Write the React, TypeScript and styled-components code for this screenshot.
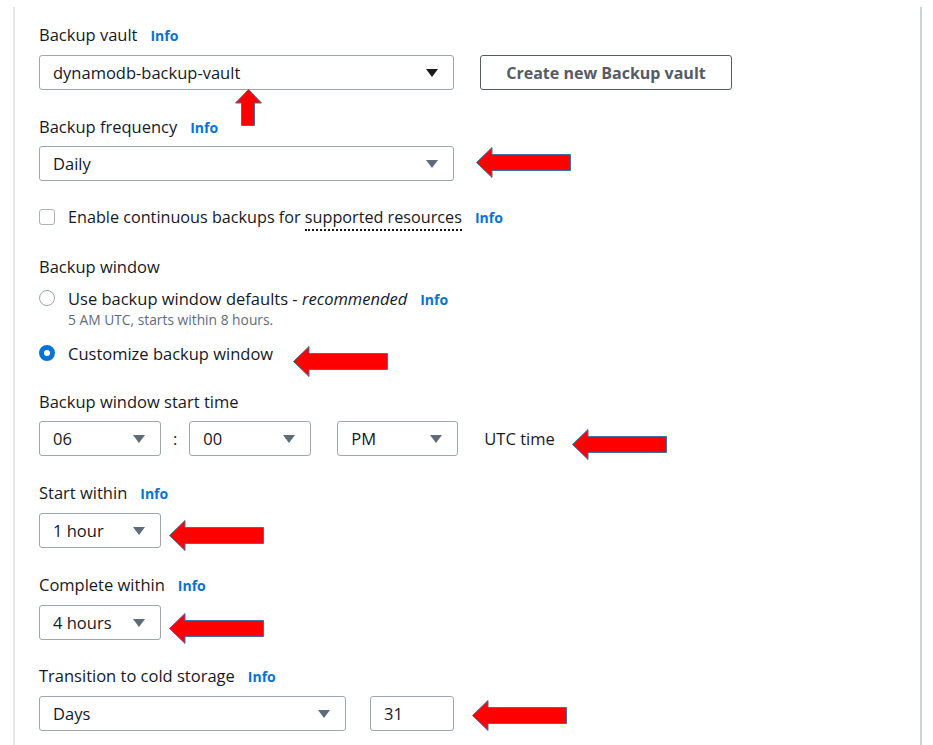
import React from 'react'
import styled, { createGlobalStyle } from 'styled-components'

const GlobalStyle = createGlobalStyle`
  html, body {
    margin: 0;
    padding: 0;
    background: #ffffff;
  }
  body {
    font-family: "Open Sans", "Liberation Sans", Arial, sans-serif;
    color: #16191f;
  }
`

const Page = styled.div`
  padding: 7px 0 0 13px;
  width: 933px;
  height: 745px;
  box-sizing: border-box;
  overflow: hidden;
`

const Panel = styled.div`
  width: 909px;
  min-height: 760px;
  box-sizing: border-box;
  border-left: 2px solid #e6e8ea;
  border-right: 2px solid #cfd2d5;
  padding: 17px 0 0 24px;
`

const Group = styled.div<{ $mb?: number }>`
  margin-bottom: ${p => (p.$mb ?? 26)}px;
`

const Label = styled.div<{ $mb?: number }>`
  display: flex;
  align-items: baseline;
  gap: 13px;
  font-size: 16.5px;
  line-height: 22px;
  margin-bottom: ${p => (p.$mb ?? 8)}px;
  color: #16191f;
`

const Info = styled.span`
  font-size: 14px;
  font-weight: 700;
  color: #0972d3;
`

const Row = styled.div<{ $gap?: number }>`
  position: relative;
  display: flex;
  align-items: center;
  gap: ${p => (p.$gap ?? 26)}px;
`

const SelectBox = styled.div<{ $w: number; $ml?: number }>`
  width: ${p => p.$w}px;
  height: 35px;
  margin-left: ${p => p.$ml ?? 0}px;
  box-sizing: border-box;
  border: 1px solid #9ea6ae;
  border-radius: 3px;
  background: #fff;
  display: flex;
  align-items: center;
  justify-content: space-between;
  padding: 0 15px 0 13px;
  font-size: 16.5px;
  color: #16191f;
`

const InputBox = styled(SelectBox)`
  justify-content: flex-start;
`

const Button = styled.div`
  width: 252px;
  height: 35px;
  box-sizing: border-box;
  border: 1px solid #545b64;
  border-radius: 3px;
  display: flex;
  align-items: center;
  justify-content: center;
  font-size: 16px;
  font-weight: 700;
  color: #545b64;
`

const Check = styled.div`
  width: 16px;
  height: 16px;
  box-sizing: border-box;
  border: 1px solid #aab2ba;
  border-radius: 3px;
  flex-shrink: 0;
`

const Radio = styled.div<{ $on?: boolean }>`
  width: 16px;
  height: 16px;
  box-sizing: border-box;
  border-radius: 50%;
  flex-shrink: 0;
  border: ${p => (p.$on ? '5px solid #0972d3' : '1.5px solid #9ea6ae')};
  background: #fff;
`

const OptionRow = styled.div<{ $fs?: number }>`
  position: relative;
  display: flex;
  align-items: center;
  gap: 13px;
  height: 22px;
  font-size: ${p => p.$fs ?? 16.5}px;
`

const OptionText = styled.span`
  display: flex;
  align-items: baseline;
  gap: 13px;
`

const Dotted = styled.span`
  border-bottom: 2px dotted #16191f;
  padding-bottom: 1px;
`

const Sub = styled.div`
  font-size: 13.8px;
  line-height: 18px;
  color: #5f6b7a;
  padding-left: 29px;
  margin: 2px 0 13px;
`

const Colon = styled.span`
  font-size: 16.5px;
`

const PlainText = styled.span`
  font-size: 16.5px;
  margin-left: 14px;
`

const Annot = styled.svg<{ $l: number; $t: number }>`
  position: absolute;
  left: ${p => p.$l}px;
  top: ${p => p.$t}px;
  overflow: visible;
`

function Caret({ dark }: { dark?: boolean }) {
  return (
    <svg width="12" height="8" viewBox="0 0 12 8">
      <polygon points="0,0 12,0 6,8" fill={dark ? '#16191f' : '#5f6b7a'} />
    </svg>
  )
}

function Select({ w, value, dark, ml }: { w: number; value: string; dark?: boolean; ml?: number }) {
  return (
    <SelectBox $w={w} $ml={ml}>
      <span>{value}</span>
      <Caret dark={dark} />
    </SelectBox>
  )
}

function LeftArrow({ l, t }: { l: number; t: number }) {
  return (
    <Annot $l={l} $t={t} width="95" height="31" viewBox="0 0 95 31">
      <polygon
        points="0.5,15.5 16,0.5 16,7.5 94.5,7.5 94.5,23.5 16,23.5 16,30.5"
        fill="#ff0000"
        stroke="#41719c"
        strokeWidth="1"
      />
    </Annot>
  )
}

function UpArrow({ l, t }: { l: number; t: number }) {
  return (
    <Annot $l={l} $t={t} width="27" height="37" viewBox="0 0 27 37">
      <polygon
        points="13.5,0.5 26.5,14 19.5,14 19.5,36.5 6.5,36.5 6.5,14 0.5,14"
        fill="#ff0000"
        stroke="#41719c"
        strokeWidth="1"
      />
    </Annot>
  )
}

export default function App() {
  return (
    <>
      <GlobalStyle />
      <Page>
        <Panel>
          <Group>
            <Label>Backup vault <Info>Info</Info></Label>
            <Row>
              <Select w={415} value="dynamodb-backup-vault" dark />
              <Button>Create new Backup vault</Button>
              <UpArrow l={196} t={34} />
            </Row>
          </Group>

          <Group $mb={25}>
            <Label $mb={7}>Backup frequency <Info>Info</Info></Label>
            <Row>
              <Select w={415} value="Daily" />
              <LeftArrow l={437} t={1} />
            </Row>
          </Group>

          <Group $mb={28}>
            <OptionRow $fs={16.2}>
              <Check />
              <OptionText>
                <span>Enable continuous backups for <Dotted>supported resources</Dotted></span>
                <Info>Info</Info>
              </OptionText>
            </OptionRow>
          </Group>

          <Group $mb={27}>
            <Label $mb={9}>Backup window</Label>
            <OptionRow>
              <Radio />
              <OptionText>
                <span>Use backup window defaults - <i>recommended</i></span>
                <Info>Info</Info>
              </OptionText>
            </OptionRow>
            <Sub>5 AM UTC, starts within 8 hours.</Sub>
            <OptionRow>
              <Radio $on />
              <span>Customize backup window</span>
              <LeftArrow l={254} t={4} />
            </OptionRow>
          </Group>

          <Group $mb={26}>
            <Label>Backup window start time</Label>
            <Row $gap={12}>
              <Select w={122} value="06" />
              <Colon>:</Colon>
              <Select w={122} value="00" />
              <Select w={121} value="PM" ml={14} />
              <PlainText>UTC time</PlainText>
              <LeftArrow l={533} t={8} />
            </Row>
          </Group>

          <Group>
            <Label>Start within <Info>Info</Info></Label>
            <Row>
              <Select w={122} value="1 hour" />
              <LeftArrow l={130} t={7} />
            </Row>
          </Group>

          <Group $mb={25}>
            <Label>Complete within <Info>Info</Info></Label>
            <Row>
              <Select w={122} value="4 hours" />
              <LeftArrow l={130} t={8} />
            </Row>
          </Group>

          <Group>
            <Label>Transition to cold storage <Info>Info</Info></Label>
            <Row $gap={24}>
              <Select w={307} value="Days" />
              <InputBox $w={84}>31</InputBox>
              <LeftArrow l={433} t={4} />
            </Row>
          </Group>
        </Panel>
      </Page>
    </>
  )
}
